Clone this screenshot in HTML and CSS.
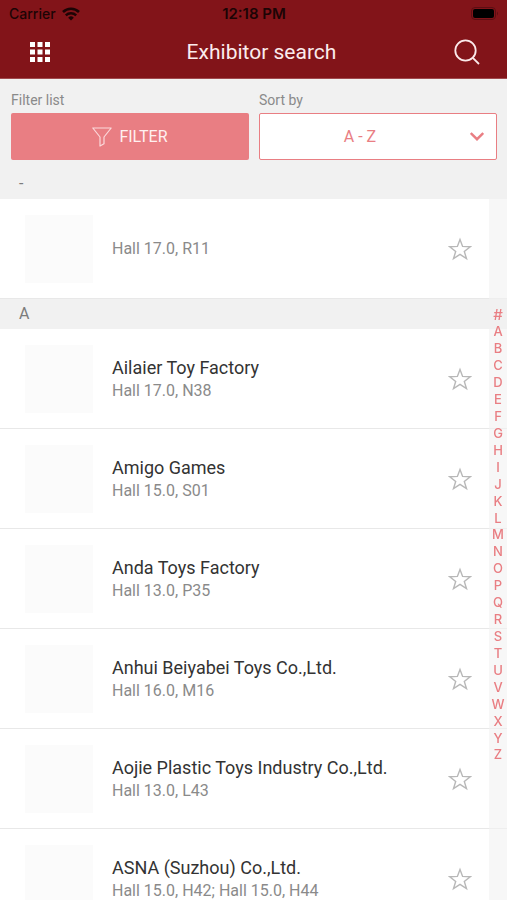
FILE: index.html
```html
<!DOCTYPE html>
<html lang="en">
<head>
<meta charset="utf-8">
<meta name="viewport" content="width=device-width, initial-scale=1">
<title>Exhibitor search</title>
<link rel="stylesheet" href="styles.css">
</head>
<body>
<svg width="0" height="0" class="defs" aria-hidden="true">
  <symbol id="star" viewBox="0 0 24 24">
    <path d="M12 2.4 L14.6 9.4 L22.2 9.7 L16.3 14.4 L18.5 21.6 L12 17.4 L5.5 21.6 L7.7 14.4 L1.8 9.7 L9.4 9.4 Z" fill="none" stroke="#b8b8b8" stroke-width="1.4"/>
  </symbol>
</svg>
<div class="app">
  <header class="top">
    <div class="status">
      <span class="carrier">Carrier
        <svg class="wifi" viewBox="0 0 18 14" aria-hidden="true">
          <path d="M1 5 A11.5 11.5 0 0 1 17 5" fill="none" stroke="#1c0405" stroke-width="2.6"/>
          <path d="M3.8 8.3 A7.5 7.5 0 0 1 14.2 8.3" fill="none" stroke="#1c0405" stroke-width="2.4"/>
          <path d="M9 13.6 L6.2 10.7 A4 4 0 0 1 11.8 10.7 Z" fill="#1c0405"/>
        </svg>
      </span>
      <span class="time">12:18 PM</span>
      <svg class="battery" viewBox="0 0 28 14" aria-hidden="true">
        <rect x="0.5" y="0.5" width="24" height="12" rx="3.5" fill="none" stroke="#5c0e13"/>
        <rect x="2" y="2" width="21" height="9" rx="2"/>
        <path d="M26 4.5 Q28 6.5 26 8.5 Z" fill="#5c0e13"/>
      </svg>
    </div>
    <div class="nav">
      <button class="icon-btn" type="button" aria-label="Menu">
        <svg class="menu-icon" viewBox="0 0 20 20" fill="#fff" aria-hidden="true">
          <path d="M0 0h5v5H0zM7.5 0h5v5h-5zM15 0h5v5h-5zM0 7.5h5v5H0zM7.5 7.5h5v5h-5zM15 7.5h5v5h-5zM0 15h5v5H0zM7.5 15h5v5h-5zM15 15h5v5h-5z"/>
        </svg>
      </button>
      <h1 class="title">Exhibitor search</h1>
      <button class="icon-btn" type="button" aria-label="Search">
        <svg class="search-icon" viewBox="0 0 26 26" fill="none" stroke="#fbe9ea" stroke-width="1.8" aria-hidden="true">
          <circle cx="11.5" cy="11.5" r="10.2"/>
          <path d="M18.8 18.8 L25 25"/>
        </svg>
      </button>
    </div>
  </header>

  <div class="tools">
    <div class="tool">
      <span class="tool-label">Filter list</span>
      <button class="filter" type="button">
        <svg class="funnel" viewBox="0 0 20 20" fill="none" stroke="#fbd9db" stroke-width="1.2" stroke-linejoin="round" aria-hidden="true">
          <path d="M0.8 1 H19.2 L12 10 V16.8 L8 19 V10 Z"/>
        </svg>
        FILTER
      </button>
    </div>
    <div class="tool">
      <label class="tool-label" for="sort">Sort by</label>
      <div class="select-wrap">
        <select class="select" id="sort"><option>A - Z</option></select>
        <svg class="chevron" viewBox="0 0 14 9" fill="none" stroke="#e97e83" stroke-width="2.4" aria-hidden="true">
          <path d="M0.8 1 L7 7.2 L13.2 1"/>
        </svg>
      </div>
    </div>
  </div>

  <div class="list-area">
    <main class="list">
      <h2 class="section">-</h2>
      <ul class="rows">
        <li class="row"><span class="thumb"></span><div class="info"><span class="hall">Hall 17.0, R11</span></div><button class="fav" type="button" aria-label="Add to favourites"><svg class="star"><use href="#star"/></svg></button></li>
      </ul>
      <h2 class="section">A</h2>
      <ul class="rows">
        <li class="row"><span class="thumb"></span><div class="info"><span class="name">Ailaier Toy Factory</span><span class="hall">Hall 17.0, N38</span></div><button class="fav" type="button" aria-label="Add to favourites"><svg class="star"><use href="#star"/></svg></button></li>
        <li class="row"><span class="thumb"></span><div class="info"><span class="name">Amigo Games</span><span class="hall">Hall 15.0, S01</span></div><button class="fav" type="button" aria-label="Add to favourites"><svg class="star"><use href="#star"/></svg></button></li>
        <li class="row"><span class="thumb"></span><div class="info"><span class="name">Anda Toys Factory</span><span class="hall">Hall 13.0, P35</span></div><button class="fav" type="button" aria-label="Add to favourites"><svg class="star"><use href="#star"/></svg></button></li>
        <li class="row"><span class="thumb"></span><div class="info"><span class="name">Anhui Beiyabei Toys Co.,Ltd.</span><span class="hall">Hall 16.0, M16</span></div><button class="fav" type="button" aria-label="Add to favourites"><svg class="star"><use href="#star"/></svg></button></li>
        <li class="row"><span class="thumb"></span><div class="info"><span class="name">Aojie Plastic Toys Industry Co.,Ltd.</span><span class="hall">Hall 13.0, L43</span></div><button class="fav" type="button" aria-label="Add to favourites"><svg class="star"><use href="#star"/></svg></button></li>
        <li class="row"><span class="thumb"></span><div class="info"><span class="name">ASNA (Suzhou) Co.,Ltd.</span><span class="hall">Hall 15.0, H42; Hall 15.0, H44</span></div><button class="fav" type="button" aria-label="Add to favourites"><svg class="star"><use href="#star"/></svg></button></li>
      </ul>
    </main>
    <nav class="index" aria-label="Alphabet">
      <div class="letters">
        <a href="#">#</a><a href="#">A</a><a href="#">B</a><a href="#">C</a><a href="#">D</a><a href="#">E</a><a href="#">F</a><a href="#">G</a><a href="#">H</a><a href="#">I</a><a href="#">J</a><a href="#">K</a><a href="#">L</a><a href="#">M</a><a href="#">N</a><a href="#">O</a><a href="#">P</a><a href="#">Q</a><a href="#">R</a><a href="#">S</a><a href="#">T</a><a href="#">U</a><a href="#">V</a><a href="#">W</a><a href="#">X</a><a href="#">Y</a><a href="#">Z</a>
      </div>
    </nav>
  </div>
</div>
</body>
</html>
```
FILE: styles.css
```css
* { box-sizing: border-box; }

body {
  margin: 0;
  font-family: Roboto, "Liberation Sans", sans-serif;
  background: #f1f1f1;
}

button, select { font: inherit; }

.defs { position: absolute; }

.app {
  display: flex;
  flex-direction: column;
  height: 100vh;
}

/* Header */
.top {
  background: #821419;
  border-bottom: 1px solid #a04a4e;
}

.status {
  display: grid;
  grid-template-columns: 1fr auto 1fr;
  align-items: center;
  height: 27px;
  padding: 0 8px 0 9px;
  font: 500 14px/27px Inter, "Liberation Sans", sans-serif;
  color: #1c0405;
}

.carrier {
  display: flex;
  align-items: center;
  gap: 6px;
}

.wifi { width: 18px; height: 14px; }

.time {
  font-size: 15px;
  font-weight: 600;
}

.battery {
  width: 28px;
  height: 14px;
  justify-self: end;
}

.nav {
  display: flex;
  align-items: center;
  height: 51px;
  padding: 0 20px 2px;
}

.icon-btn {
  display: flex;
  align-items: center;
  justify-content: center;
  width: 40px;
  height: 40px;
  padding: 0;
  border: 0;
  background: none;
}

.menu-icon { width: 20px; height: 20px; }
.search-icon { width: 26px; height: 26px; }

.title {
  flex: 1;
  margin: 0;
  padding-left: 16px;
  font-size: 21px;
  font-weight: 400;
  text-align: center;
  color: #fbeced;
}

/* Filter and sort */
.tools {
  display: grid;
  grid-template-columns: 1fr 1fr;
  gap: 10px;
  padding: 12px 10px 9px 11px;
}

.tool {
  display: flex;
  flex-direction: column;
  gap: 4px;
}

.tool-label {
  font-size: 14px;
  line-height: 18px;
  color: #8a8a8a;
}

.filter {
  display: flex;
  align-items: center;
  justify-content: center;
  gap: 7px;
  height: 47px;
  border: 0;
  border-radius: 2px;
  background: #e97e83;
  font-size: 16px;
  color: #fff0f0;
}

.funnel { width: 20px; height: 20px; }

.select-wrap { position: relative; }

.select {
  width: 100%;
  height: 47px;
  padding: 0 36px 0 0;
  border: 1px solid #e97e83;
  border-radius: 2px;
  background: #fff;
  appearance: none;
  font-size: 16px;
  text-align-last: center;
  color: #e97e83;
}

.chevron {
  position: absolute;
  top: 19px;
  right: 13px;
  width: 14px;
  height: 9px;
  pointer-events: none;
}

/* Exhibitor list */
.list-area {
  position: relative;
  flex: 1;
  min-height: 0;
}

.list {
  height: 100%;
  overflow-y: auto;
  scrollbar-width: none;
}

.section {
  margin: 0;
  padding: 0 19px;
  background: #f1f1f1;
  font-size: 16px;
  font-weight: 400;
  line-height: 30px;
  color: #7c7c7c;
}

.rows {
  margin: 0;
  padding: 0;
  list-style: none;
}

.row {
  display: flex;
  align-items: center;
  height: 100px;
  padding: 0 35px 0 25px;
  border-bottom: 1px solid #e8e8e8;
  background: #fff;
}

.thumb {
  width: 68px;
  height: 68px;
  margin-right: 19px;
  background: #fbfbfb;
}

.info {
  display: flex;
  flex: 1;
  flex-direction: column;
}

.name {
  font-size: 18px;
  line-height: 24px;
  color: #333;
}

.hall {
  font-size: 16px;
  line-height: 22px;
  color: #8a8a8a;
}

.fav {
  display: flex;
  padding: 0;
  border: 0;
  background: none;
}

.star { width: 24px; height: 24px; }

/* Alphabet index */
.index {
  position: absolute;
  top: 0;
  right: 0;
  bottom: 0;
  display: flex;
  flex-direction: column;
  justify-content: center;
  width: 18px;
  background: rgba(241, 241, 241, 0.6);
}

.letters {
  display: flex;
  flex-direction: column;
  align-items: center;
  justify-content: space-between;
  height: 456px;
}

.letters a {
  font: 500 13px/16px Inter, "Liberation Sans", sans-serif;
  color: #e97e83;
  text-decoration: none;
}

.letters a:first-child { font-size: 15px; }
```
